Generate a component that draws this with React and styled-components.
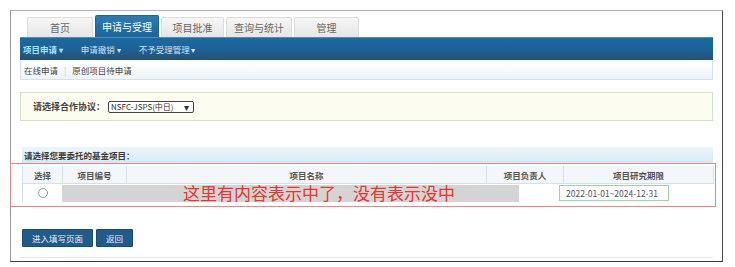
import React from 'react';
import styled, { createGlobalStyle } from 'styled-components';

const GlobalStyle = createGlobalStyle`
  html, body { margin: 0; padding: 0; background: #ffffff; }
  body {
    font-family: "Noto Sans CJK SC", "Liberation Sans", sans-serif;
    color: #444;
  }
`;

const tabs = [
  { label: '首页', width: 66 },
  { label: '申请与受理', width: 64, active: true },
  { label: '项目批准', width: 63 },
  { label: '查询与统计', width: 66 },
  { label: '管理', width: 65 },
];
const menus = ['项目申请', '申请撤销', '不予受理管理'];
const columns = ['选择', '项目编号', '项目名称', '项目负责人', '项目研究期限'];

const Frame = styled.div`
  margin: 10px 0 0 10px;
  width: 693px;
  height: 243px;
  padding: 4px 9px 3px 9px;
  border-top: 1px solid #b5b5b5;
  border-left: 1px solid #9a9a9a;
  border-right: 1px solid #4a4a4a;
  border-bottom: 1px solid #3c3c3c;
  display: flex;
  flex-direction: column;
`;

const TabRow = styled.div`
  display: flex;
  align-items: flex-end;
  gap: 2px;
  padding-left: 7px;
  height: 22px;
`;

const Tab = styled.div`
  width: ${p => p.$width}px;
  height: ${p => (p.$active ? 22 : 20)}px;
  box-sizing: border-box;
  display: flex;
  align-items: center;
  justify-content: center;
  font-size: 10px;
  border-radius: 2px 2px 0 0;
  color: ${p => (p.$active ? '#ffffff' : '#666')};
  background: ${p => (p.$active ? 'linear-gradient(#2a7bb5, #1c659d)' : 'linear-gradient(#f6f6f6, #e6e6e6)')};
  border: 1px solid ${p => (p.$active ? '#1c659d' : '#dcdcdc')};
  border-bottom: none;
`;

const NavBar = styled.div`
  height: 22px;
  display: flex;
  align-items: center;
  gap: 18px;
  padding-left: 3px;
  background: linear-gradient(#1a6ba3, #1f5f92 60%, #27506f);
  border-top: 1px solid #4a8cc0;
`;

const NavItem = styled.div`
  font-size: 8.5px;
  font-weight: ${p => (p.$current ? 700 : 400)};
  color: ${p => (p.$current ? '#9fe3ff' : '#cfe4f4')};
  &::after { content: ' ▾'; font-size: 8px; }
`;

const SubBar = styled.div`
  height: 20px;
  box-sizing: border-box;
  display: flex;
  align-items: center;
  padding-left: 3px;
  background: linear-gradient(#ffffff, #eef3f7);
  border: 1px solid #d6e0e8;
  border-top: none;
`;

const SubLink = styled.span`
  font-size: 8.5px;
  color: #444;
  & + &::before {
    content: '|';
    color: #c8c8c8;
    margin: 0 6px;
  }
`;

const AgreementBox = styled.div`
  margin-top: 12px;
  height: 29px;
  box-sizing: border-box;
  display: flex;
  align-items: center;
  padding-left: 12px;
  gap: 3px;
  background: #fdfcf0;
  border: 1px solid #cfe3c2;
`;

const Label = styled.span`
  font-size: 9px;
  font-weight: 700;
  color: #444;
`;

const Select = styled.div`
  width: 86px;
  height: 12px;
  box-sizing: border-box;
  border: 1px solid #444;
  border-radius: 2px;
  display: flex;
  align-items: center;
  justify-content: space-between;
  padding: 0 4px 0 2px;
  font-size: 8px;
  color: #333;
  background: #fff;
  &::after { content: '▾'; font-size: 10px; line-height: 1; }
`;

const SectionHead = styled.div`
  margin: 26px 0 0 2px;
  height: 16px;
  display: flex;
  align-items: center;
  padding-left: 2px;
  font-size: 8.5px;
  font-weight: 700;
  color: #3a3a3a;
  background: linear-gradient(#edf5fb, #d6e8f5);
`;

const TableWrap = styled.div`
  position: relative;
  margin: 3px 0 0 2px;
`;

const Grid = styled.div`
  display: grid;
  grid-template-columns: 40px 64px 360px 77px 150px;
  border-left: 1px solid #d6e0e8;
`;

const HeadCell = styled.div`
  height: 18px;
  box-sizing: border-box;
  display: flex;
  align-items: center;
  justify-content: center;
  font-size: 8.5px;
  font-weight: 700;
  color: #555;
  background: #f3f7fa;
  border-right: 1px solid #d6e0e8;
  border-bottom: 1px solid #d6e0e8;
`;

const Cell = styled.div`
  height: 18px;
  box-sizing: border-box;
  display: flex;
  align-items: center;
  justify-content: ${p => (p.$start ? 'flex-start' : 'center')};
`;

const Radio = styled.span`
  width: 8px;
  height: 8px;
  border-radius: 50%;
  border: 1px solid #999;
  background: #fff;
`;

const DateInput = styled.div`
  width: 110px;
  height: 16px;
  box-sizing: border-box;
  margin-left: -5px;
  display: flex;
  align-items: center;
  padding-left: 6px;
  font-size: 8.5px;
  color: #555;
  border: 1px solid #9fd0b0;
  background: #fff;
`;

const Redaction = styled.div`
  position: absolute;
  left: 40px;
  top: 19px;
  width: 457px;
  height: 17px;
  background: #d4d4d4;
`;

const Annotation = styled.div`
  position: absolute;
  left: 161px;
  top: 14px;
  font-size: 17px;
  color: #e8352e;
  white-space: nowrap;
`;

const RedFrame = styled.div`
  position: absolute;
  left: -12px;
  right: -3px;
  top: -3px;
  bottom: -5px;
  border: 1px solid #e7868a;
  pointer-events: none;
`;

const Buttons = styled.div`
  margin: 27px 0 0 2px;
  display: flex;
  gap: 3px;
`;

const Button = styled.button`
  height: 18px;
  padding: 0 ${p => p.$pad}px;
  font-family: inherit;
  font-size: 8.5px;
  color: #e8f2fa;
  background: #215b8b;
  border: 1px solid #1b4c74;
  border-radius: 1px;
`;

const FootLine = styled.div`
  margin-top: auto;
  height: 1px;
  background: #e2ecf3;
`;

export default function App() {
  return (
    <>
      <GlobalStyle />
      <Frame>
        <TabRow>
          {tabs.map(t => (
            <Tab key={t.label} $active={t.active} $width={t.width}>{t.label}</Tab>
          ))}
        </TabRow>
        <NavBar>
          {menus.map((m, i) => (
            <NavItem key={m} $current={i === 0}>{m}</NavItem>
          ))}
        </NavBar>
        <SubBar>
          <SubLink>在线申请</SubLink>
          <SubLink>原创项目待申请</SubLink>
        </SubBar>
        <AgreementBox>
          <Label>请选择合作协议：</Label>
          <Select>NSFC-JSPS(中日)</Select>
        </AgreementBox>
        <SectionHead>请选择您要委托的基金项目：</SectionHead>
        <TableWrap>
          <Grid>
            {columns.map(c => <HeadCell key={c}>{c}</HeadCell>)}
            <Cell><Radio /></Cell>
            <Cell />
            <Cell />
            <Cell />
            <Cell $start><DateInput>2022-01-01~2024-12-31</DateInput></Cell>
          </Grid>
          <Redaction />
          <Annotation>这里有内容表示中了，没有表示没中</Annotation>
          <RedFrame />
        </TableWrap>
        <Buttons>
          <Button $pad={9}>进入填写页面</Button>
          <Button $pad={9}>返回</Button>
        </Buttons>
        <FootLine />
      </Frame>
    </>
  );
}
